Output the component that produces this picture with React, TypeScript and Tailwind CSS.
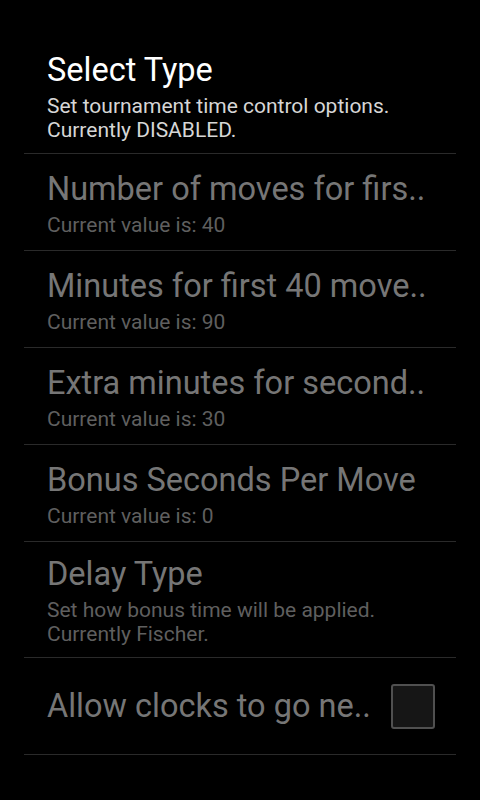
import React from "react";

const font = { fontFamily: "Roboto, 'Noto Sans', sans-serif" };

function Row({
  title,
  summary,
  enabled = false,
  tall = false,
}: {
  title: string;
  summary: string[];
  enabled?: boolean;
  tall?: boolean;
}) {
  return (
    <div
      className={`flex flex-col justify-center border-b border-[#2a2a2a] pl-[23px] pr-2 pt-[2px] ${
        tall ? "h-[116px]" : "h-[97px]"
      }`}
    >
      <div
        className={`whitespace-nowrap text-[32.5px] leading-[38px] ${
          enabled ? "text-white" : "text-[#767676]"
        }`}
      >
        {title}
      </div>
      <div
        className={`mt-[5px] text-[21px] leading-[24px] ${
          enabled ? "text-[#d6d6d6]" : "text-[#5f5f5f]"
        }`}
      >
        {summary.map((s) => (
          <div key={s} className="whitespace-nowrap">
            {s}
          </div>
        ))}
      </div>
    </div>
  );
}

export default function App() {
  return (
    <div className="h-[800px] w-[480px] overflow-hidden bg-black" style={font}>
      <div className="mx-6 pt-[38px]">
        <Row
          enabled
          tall
          title="Select Type"
          summary={["Set tournament time control options.", "Currently DISABLED."]}
        />
        <Row title="Number of moves for firs.." summary={["Current value is: 40"]} />
        <Row title="Minutes for first 40 move.." summary={["Current value is: 90"]} />
        <Row title="Extra minutes for second.." summary={["Current value is: 30"]} />
        <Row title="Bonus Seconds Per Move" summary={["Current value is: 0"]} />
        <Row
          tall
          title="Delay Type"
          summary={["Set how bonus time will be applied.", "Currently Fischer."]}
        />
        <div className="flex h-[97px] items-center border-b border-[#2a2a2a] pl-[23px] pr-[21px]">
          <div className="flex-1 whitespace-nowrap text-[32.5px] leading-[38px] text-[#767676]">
            Allow clocks to go ne..
          </div>
          <div className="h-[45px] w-[44px] rounded-[3px] border-2 border-[#505050] bg-[#161616]" />
        </div>
      </div>
    </div>
  );
}
